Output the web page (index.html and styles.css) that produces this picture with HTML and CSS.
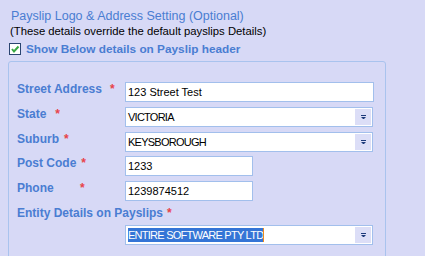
FILE: index.html
```html
<!DOCTYPE html>
<html lang="en">
<head>
  <meta charset="UTF-8">
  <title>Payslip Logo &amp; Address Setting</title>
  <link rel="stylesheet" href="styles.css">
</head>
<body>
  <div class="page">
    <h1 class="title">Payslip Logo &amp; Address Setting (Optional)</h1>
    <p class="note">(These details override the default payslips Details)</p>

    <label class="show-row">
      <span class="check">
        <svg width="10" height="10" viewBox="0 0 10 10"><path d="M2 5 L4 7.5 L8.5 2.5" fill="none" stroke="#3aa845" stroke-width="2"/></svg>
      </span>
      Show Below details on Payslip header
    </label>

    <!-- Address group box -->
    <div class="group">
      <div class="row">
        <span class="label">Street Address<span class="req gap-street">*</span></span>
        <div class="field wide">123 Street Test</div>
      </div>
      <div class="row">
        <span class="label">State<span class="req gap-state">*</span></span>
        <div class="field combo">
          <span class="value caps">VICTORIA</span>
          <span class="drop"><svg width="5" height="4" viewBox="0 0 5 4"><rect x="0" y="0" width="5" height="1" fill="#1d3a7a"/><path d="M0 2 H5 L2.5 4.5 Z" fill="#1d3a7a"/></svg></span>
        </div>
      </div>
      <div class="row">
        <span class="label">Suburb<span class="req gap-suburb">*</span></span>
        <div class="field combo">
          <span class="value caps">KEYSBOROUGH</span>
          <span class="drop"><svg width="5" height="4" viewBox="0 0 5 4"><rect x="0" y="0" width="5" height="1" fill="#1d3a7a"/><path d="M0 2 H5 L2.5 4.5 Z" fill="#1d3a7a"/></svg></span>
        </div>
      </div>
      <div class="row row-tight">
        <span class="label">Post Code<span class="req gap-post">*</span></span>
        <div class="field short">1233</div>
      </div>
      <div class="row">
        <span class="label"><span class="phone-name">Phone</span><span class="req">*</span></span>
        <div class="field short">1239874512</div>
      </div>
      <div class="entity-label">Entity Details on Payslips<span class="req gap-entity">*</span></div>
      <div class="row">
        <span class="label"></span>
        <div class="field combo">
          <span class="value caps"><span class="selected">ENTIRE SOFTWARE PTY LTD</span><span class="caret"></span></span>
          <span class="drop"><svg width="5" height="4" viewBox="0 0 5 4"><rect x="0" y="0" width="5" height="1" fill="#1d3a7a"/><path d="M0 2 H5 L2.5 4.5 Z" fill="#1d3a7a"/></svg></span>
        </div>
      </div>
    </div>
  </div>
</body>
</html>
```

FILE: styles.css
```css
body {
  margin: 0;
  background-color: #d7d9f6;
  font-family: "Liberation Sans", Arial, sans-serif;
  height: 256px;
  overflow: hidden;
}

.page {
  padding: 9px 0 0 8px;
}

.title {
  margin: 0 0 0 3px;
  font-size: 12.5px;
  line-height: 15px;
  font-weight: normal;
  color: #4a7dd2;
}

.note {
  margin: 1px 0 0 2px;
  font-size: 11.3px;
  line-height: 13px;
  color: #000;
}

/* Checkbox row */
.show-row {
  display: flex;
  align-items: center;
  gap: 5px;
  margin-top: 4px;
  margin-left: 1px;
  font-size: 11.8px;
  line-height: 14px;
  font-weight: bold;
  color: #4a7dd2;
}

.check {
  width: 10px;
  height: 10px;
  border: 1px solid #2a4470;
  background-color: #fff;
  display: flex;
  align-items: center;
  justify-content: center;
}

/* Group box */
.group {
  margin-top: 5px;
  width: 378px;
  height: 200px;
  border: 1px solid #a9c3ee;
  border-radius: 3px;
  padding: 20px 0 0 8px;
  box-sizing: border-box;
}

.row {
  display: flex;
  align-items: flex-start;
  margin-bottom: 5px;
}

.row-tight {
  margin-top: -1px;
}

.label {
  width: 108px;
  flex-shrink: 0;
  font-size: 12px;
  line-height: 14px;
  font-weight: bold;
  color: #4a7dd2;
}

.req {
  color: #e8434a;
  font-weight: bold;
}

.gap-street { margin-left: 8px; }
.gap-state { margin-left: 9px; }
.gap-suburb { margin-left: 5px; }
.gap-post { margin-left: 5px; }
.gap-entity { margin-left: 4px; }

.phone-name {
  display: inline-block;
  width: 63px;
}

.entity-label {
  font-size: 12px;
  font-weight: bold;
  color: #4a7dd2;
  margin: 5px 0 5px;
  line-height: 14px;
}

.field {
  height: 20px;
  box-sizing: border-box;
  border: 1px solid #a2bfec;
  background-color: #fff;
  font-size: 11px;
  line-height: 18px;
  padding-left: 2px;
  color: #000;
}

.caps {
  letter-spacing: -0.75px;
}

.wide {
  width: 249px;
}

.short {
  width: 128px;
}

.combo {
  width: 248px;
  display: flex;
  justify-content: space-between;
  padding-right: 1px;
}

.drop {
  width: 16px;
  height: 16px;
  margin-top: 1px;
  background-color: #dcdef7;
  display: flex;
  align-items: center;
  justify-content: center;
}

.selected {
  background-color: #3575d6;
  color: #fff;
  padding: 1px 0;
}

.caret {
  display: inline-block;
  width: 1px;
  height: 14px;
  background-color: #f08a1c;
  vertical-align: -3px;
}
```
